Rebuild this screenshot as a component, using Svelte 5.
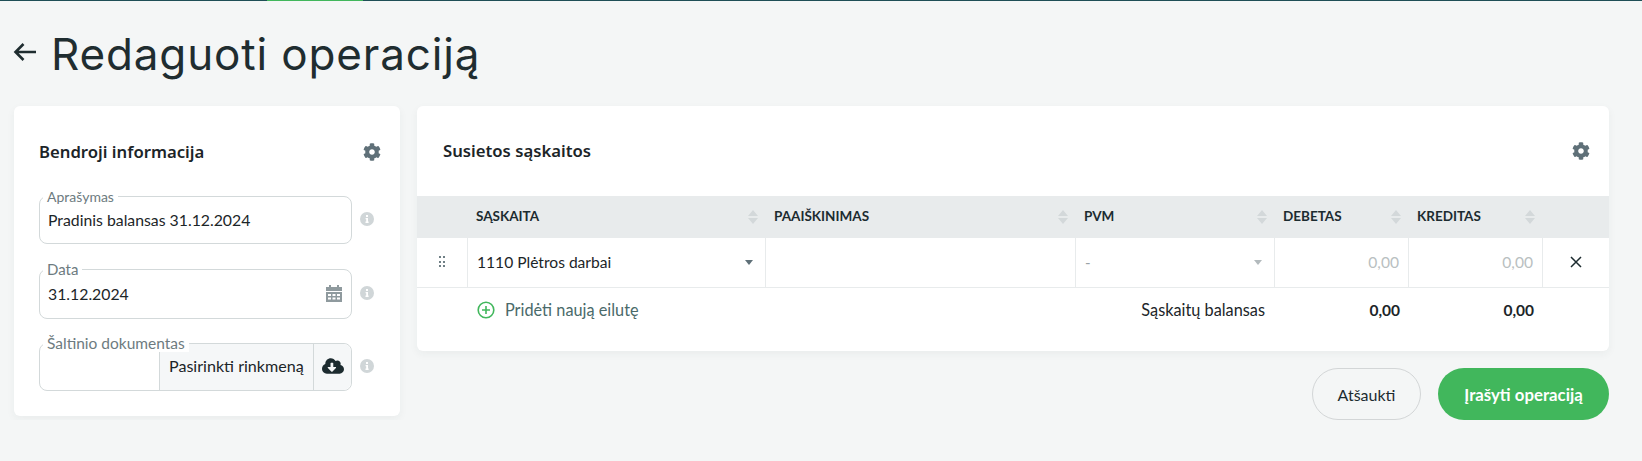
<script>
  const cog = "M487.4 315.7l-42.6-24.6c4.3-23.2 4.3-47 0-70.2l42.6-24.6c4.9-2.8 7.1-8.6 5.5-14-11.1-35.6-30-67.8-54.7-94.6-3.8-4.1-10-5.1-14.8-2.3L380.8 110c-17.9-15.4-38.5-27.3-60.8-35.1V25.8c0-5.6-3.9-10.5-9.4-11.7-36.7-8.2-74.3-7.8-109.2 0-5.5 1.2-9.4 6.1-9.4 11.7V75c-22.2 7.9-42.8 19.8-60.8 35.1L88.7 85.5c-4.9-2.8-11-1.9-14.8 2.3-24.7 26.7-43.6 58.9-54.7 94.6-1.7 5.4.6 11.2 5.5 14L67.3 221c-4.3 23.2-4.3 47 0 70.2l-42.6 24.6c-4.9 2.8-7.1 8.6-5.5 14 11.1 35.6 30 67.8 54.7 94.6 3.8 4.1 10 5.1 14.8 2.3l42.6-24.6c17.9 15.4 38.5 27.3 60.8 35.1v49.2c0 5.6 3.9 10.5 9.4 11.7 36.7 8.2 74.3 7.8 109.2 0 5.5-1.2 9.4-6.1 9.4-11.7v-49.2c22.2-7.9 42.8-19.8 60.8-35.1l42.6 24.6c4.9 2.8 11 1.9 14.8-2.3 24.7-26.7 43.6-58.9 54.7-94.6 1.5-5.5-.7-11.3-5.6-14.1zM256 336c-44.1 0-80-35.9-80-80s35.9-80 80-80 80 35.9 80 80-35.9 80-80 80z";
  const cloud = "M537.6 226.6c4.1-10.7 6.4-22.4 6.4-34.6 0-53-43-96-96-96-19.7 0-38.1 6-53.3 16.2C367 64.2 315.3 32 256 32c-88.4 0-160 71.6-160 160 0 2.7.1 5.4.2 8.1C40.2 219.8 0 273.2 0 336c0 79.5 64.5 144 144 144h368c70.7 0 128-57.3 128-128 0-61.9-44-113.6-102.4-125.4zm-132.9 88.7L299.3 420.7c-6.2 6.2-16.4 6.2-22.6 0L171.3 315.3c-10.1-10.1-2.9-27.3 11.3-27.3H248V176c0-8.8 7.2-16 16-16h48c8.8 0 16 7.2 16 16v112h65.4c14.2 0 21.4 17.2 11.3 27.3z";

  const columns = ["SĄSKAITA", "PAAIŠKINIMAS", "PVM", "DEBETAS", "KREDITAS"];
</script>

{#snippet info()}
  <svg class="info" viewBox="0 0 14 14">
    <circle cx="7" cy="7" r="7" fill="#d0d6d8" />
    <rect x="6" y="3" width="2" height="2" fill="#fff" />
    <path d="M5.6 6h2.4v3.6h.6V11H5.5V9.6h.7V7.3h-.6z" fill="#fff" />
  </svg>
{/snippet}

{#snippet gear()}
  <svg class="gear" viewBox="0 0 512 512"><path d={cog} fill="#5f7078" /></svg>
{/snippet}

<div class="topbar"><span class="progress"></span></div>

<header>
  <svg class="back" viewBox="0 0 23 20">
    <path d="M23 10H2.500M10.500 2 2.500 10l8 8" fill="none" stroke="#1f2d30" stroke-width="2.600" />
  </svg>
  <h1>Redaguoti operaciją</h1>
</header>

<main>
  <section class="card left">
    <div class="card-head">
      <h2>Bendroji informacija</h2>
      {@render gear()}
    </div>

    <div class="field-row">
      <div class="field first">
        <span class="label">Aprašymas</span>
        <span class="value">Pradinis balansas 31.12.2024</span>
      </div>
      {@render info()}
    </div>

    <div class="field-row tight">
      <div class="field second">
        <span class="label">Data</span>
        <span class="value">31.12.2024</span>
        <svg class="calendar" viewBox="0 0 16 17">
          <path fill="#8f9a9e" d="M3 0h2v2h6V0h2v2h3v4H0V2h3zM0 7h16v10H0zm2 2v2h3V9zm4.5 0v2h3V9zM11 9v2h3V9zm-9 3.5v2h3v-2zm4.500 0v2h3v-2zm4.500 0v2h3v-2z" fill-rule="evenodd" />
        </svg>
      </div>
      {@render info()}
    </div>

    <div class="field-row last">
      <div class="field third">
        <span class="label">Šaltinio dokumentas</span>
        <span class="file-name"></span>
        <span class="file-btn">Pasirinkti rinkmeną</span>
        <span class="file-icon">
          <svg viewBox="0 0 640 512"><path d={cloud} fill="#1c2b2f" /></svg>
        </span>
      </div>
      {@render info()}
    </div>
  </section>

  <div class="right">
    <section class="card accounts">
      <div class="card-head wide">
        <h2>Susietos sąskaitos</h2>
        {@render gear()}
      </div>

      <div class="table">
        <div class="th"></div>
        {#each columns as col}
          <div class="th">
            <span>{col}</span>
            <svg class="sort" viewBox="0 0 10 14">
              <path d="M5 0l5 6H0zM5 14l5-6H0z" fill="#d3d8da" />
            </svg>
          </div>
        {/each}
        <div class="th"></div>

        <div class="td grip">
          <svg viewBox="0 0 6 11" width="6" height="11">
            <g fill="#6f7f85">
              <rect x="0" y="0" width="2" height="2" />
              <rect x="4" y="0" width="2" height="2" />
              <rect x="0" y="5" width="2" height="2" />
              <rect x="4" y="5" width="2" height="2" />
              <rect x="0" y="9" width="2" height="2" />
              <rect x="4" y="9" width="2" height="2" />
            </g>
          </svg>
        </div>
        <div class="td select">
          <span>1110 Plėtros darbai</span>
          <i class="caret"></i>
        </div>
        <div class="td"></div>
        <div class="td select muted">
          <span>-</span>
          <i class="caret light"></i>
        </div>
        <div class="td num">0,00</div>
        <div class="td num">0,00</div>
        <div class="td close">
          <svg viewBox="0 0 12 12" width="12" height="12">
            <path d="M1 1l10 10M11 1 1 11" stroke="#1c2b2f" stroke-width="1.500" />
          </svg>
        </div>

        <div class="foot"></div>
        <div class="foot add">
          <svg viewBox="0 0 18 18" width="18" height="18">
            <circle cx="9" cy="9" r="7.800" fill="none" stroke="#41b75c" stroke-width="1.600" />
            <path d="M9 5v8M5 9h8" stroke="#41b75c" stroke-width="1.600" />
          </svg>
          <span>Pridėti naują eilutę</span>
        </div>
        <div class="foot balance">Sąskaitų balansas</div>
        <div class="foot total">0,00</div>
        <div class="foot total">0,00</div>
        <div class="foot"></div>
      </div>
    </section>

    <div class="actions">
      <button class="cancel">Atšaukti</button>
      <button class="save">Įrašyti operaciją</button>
    </div>
  </div>
</main>

<style>
  :global(body) {
    margin: 0;
    background: #f4f6f6;
    font-family: "Lato", "Noto Sans", sans-serif;
    color: #1c2528;
  }

  .topbar {
    height: 1px;
    background: #1f4f56;
    padding-left: 267px;
  }

  .progress {
    display: block;
    width: 96px;
    height: 1px;
    background: #41b75c;
  }

  header {
    display: flex;
    align-items: center;
    height: 105px;
    padding-left: 13px;
  }

  .back {
    width: 23px;
    height: 20px;
    margin: 0 15px 3px 0;
  }

  h1 {
    margin: 0;
    font-family: "Inter", sans-serif;
    font-weight: 400;
    font-size: 44px;
    letter-spacing: 0.850px;
    color: #1f2d30;
  }

  main {
    display: flex;
    align-items: flex-start;
    gap: 17px;
    padding-left: 14px;
  }

  .card {
    background: #fff;
    border-radius: 6px;
    box-shadow: 0 3px 8px rgba(40, 60, 60, 0.05);
  }

  .left {
    width: 386px;
    box-sizing: border-box;
    padding: 0 19px 25px 25px;
  }

  .card-head {
    display: flex;
    align-items: center;
    justify-content: space-between;
    height: 90px;
  }

  .card-head.wide {
    padding: 0 19px 0 26px;
  }

  .left .card-head {
    padding-top: 2px;
    height: 88px;
  }

  h2 {
    margin: 0 0 2px;
    font-family: "Noto Sans", sans-serif;
    font-weight: 600;
    font-size: 16.700px;
    color: #1c2528;
  }

  .gear {
    width: 18px;
    height: 18px;
  }

  .field-row {
    display: flex;
    align-items: center;
    justify-content: space-between;
    margin-bottom: 25px;
  }

  .field-row.tight {
    margin-bottom: 24px;
  }

  .field-row.last {
    margin-bottom: 0;
  }

  .field {
    position: relative;
    display: flex;
    align-items: center;
    width: 313px;
    height: 48px;
    box-sizing: border-box;
    border: 1px solid #d3d9da;
    border-radius: 8px;
    font-size: 15.800px;
  }

  .field.second {
    height: 50px;
  }

  .label {
    position: absolute;
    top: -9px;
    left: 3px;
    padding: 0 4px;
    background: #fff;
    font-size: 15px;
    line-height: 17px;
    color: #6d7b80;
    z-index: 1;
  }

  .first .label {
    font-size: 14px;
  }

  .third .label {
    font-size: 15.500px;
  }

  .value {
    padding-left: 8px;
    margin-bottom: 2px;
  }

  .calendar {
    margin-left: auto;
    margin-right: 9px;
    margin-bottom: 2px;
    width: 16px;
    height: 17px;
  }

  .info {
    width: 14px;
    height: 14px;
    margin-right: 7px;
    margin-bottom: 2px;
  }

  .file-name {
    flex: 1;
  }

  .file-btn,
  .file-icon {
    display: flex;
    align-items: center;
    height: 100%;
    background: #f5f7f8;
    border-left: 1px solid #d3d9da;
    box-sizing: border-box;
  }

  .file-btn {
    width: 154px;
    padding-left: 9px;
    padding-bottom: 3px;
    font-size: 16.100px;
  }

  .file-icon {
    width: 38px;
    justify-content: center;
    padding-bottom: 3px;
    border-radius: 0 8px 8px 0;
  }

  .file-icon svg {
    width: 22px;
    height: 18px;
  }

  .right {
    width: 1192px;
  }

  .table {
    display: grid;
    grid-template-columns: 50px 298px 310px 199px 134px 134px 67px;
    grid-template-rows: 42px 50px 63px;
  }

  .th {
    display: flex;
    align-items: center;
    justify-content: space-between;
    background: #e8ebec;
    padding: 0 7px 0 9px;
    font-size: 13.500px;
    font-weight: 700;
    color: #1c2b30;
  }

  .th span {
    margin-bottom: 3px;
  }

  .sort {
    width: 10px;
    height: 14px;
    margin-bottom: 1px;
  }

  .td {
    display: flex;
    align-items: center;
    padding-bottom: 2px;
    border-bottom: 1px solid #e8ebec;
    border-left: 1px solid #e8ebec;
    box-sizing: border-box;
    font-size: 15.600px;
  }

  .grip {
    border-left: 0;
    justify-content: center;
  }

  .select {
    justify-content: space-between;
    padding: 0 12px 2px 9px;
  }

  .muted {
    color: #9aa3a6;
    font-size: 15px;
  }

  .caret {
    width: 0;
    height: 0;
    margin-top: 2px;
    border-left: 4.500px solid transparent;
    border-right: 4.500px solid transparent;
    border-top: 5px solid #5f7078;
  }

  .caret.light {
    border-top-color: #b3babd;
  }

  .num {
    justify-content: flex-end;
    padding-right: 9px;
    color: #b9bfc1;
  }

  .close {
    justify-content: center;
    padding-bottom: 2px;
  }

  .foot {
    display: flex;
    align-items: center;
    justify-content: flex-end;
    padding: 0 9px 20px 0;
    font-size: 16.300px;
  }

  .add {
    justify-content: flex-start;
    gap: 10px;
    padding-left: 10px;
    color: #4a6a6a;
  }

  .balance {
    grid-column: 3 / 5;
  }

  .total {
    font-size: 15.500px;
    font-weight: 700;
    padding-right: 8px;
  }

  .actions {
    display: flex;
    justify-content: flex-end;
    gap: 17px;
    margin-top: 17px;
  }

  button {
    height: 52px;
    border-radius: 26px;
    font: inherit;
    font-size: 16px;
  }

  .cancel {
    width: 109px;
    background: transparent;
    border: 1px solid #d3d6d7;
    color: #1c2b30;
  }

  .save {
    width: 171px;
    background: #41b75c;
    border: 0;
    color: #fff;
    font-size: 16.800px;
    font-weight: 700;
  }
</style>
